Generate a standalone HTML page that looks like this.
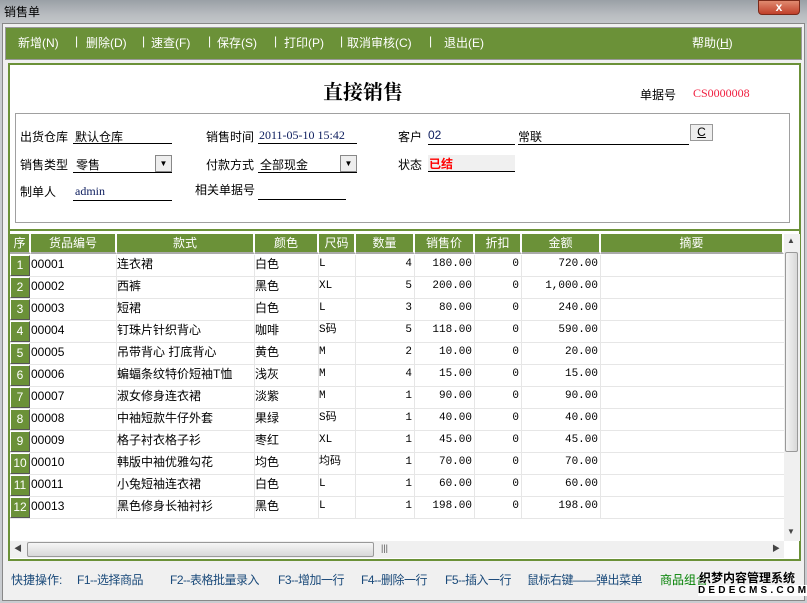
<!DOCTYPE html>
<html><head><meta charset="utf-8"><style>
*{margin:0;padding:0;box-sizing:border-box}
body{width:807px;height:603px;position:relative;overflow:hidden;background:#c9ccd0;font-family:"Liberation Sans","Noto Sans CJK SC",sans-serif;font-size:12px;color:#000}
.a{position:absolute;white-space:nowrap}
.tb{color:#fff;font-size:12px;top:34px}
.ul{position:absolute;border-bottom:1px solid #000;height:1px}
.mono{font-family:"Liberation Mono","Noto Sans CJK SC",monospace;font-size:11px}
.hc{position:absolute;top:234px;height:20px;background:#6b9138;color:#fff;text-align:center;line-height:19px;font-size:12px;border-right:2px solid #fff;border-bottom:2px solid #aaa}
.row{position:absolute;left:10px;width:774px;height:22px;border-bottom:1px solid #e6e6e6}
.c{position:absolute;top:0;height:21px;line-height:19px;border-right:1px solid #e6e6e6;overflow:hidden}
.r{text-align:right;padding-right:2px}
.sq{background:#6b9138;color:#fff;text-align:center;width:20px;left:0;border:1px solid #fff;border-right-color:#555;border-bottom-color:#555}
.st{position:absolute;top:571px;color:#1a4a7a;white-space:nowrap}
</style></head><body>
<div class="a" style="left:0;top:0;width:807px;height:24px;background:linear-gradient(#9aa0a6,#b8bcc0 60%,#c4c7ca)"></div>
<div class="a" style="left:4px;top:3px;font-size:12px;color:#000">销售单</div>
<div class="a" style="left:758px;top:0;width:42px;height:15px;background:linear-gradient(#e08a70,#c0402a);border:1px solid #7a2a1a;border-radius:0 0 4px 4px;color:#fff;text-align:center;font-size:12px;line-height:13px;font-weight:bold">x</div>
<div class="a" style="left:2px;top:23px;width:803px;height:578px;background:#f0f0f0;border:1px solid #888"></div>
<div class="a" style="left:5px;top:27px;width:797px;height:33px;background:#6b9138;border:1px solid #999"></div>
<div class="a tb" style="left:18px">新增(N)</div>
<div class="a tb" style="left:75px">|</div>
<div class="a tb" style="left:86px">删除(D)</div>
<div class="a tb" style="left:142px">|</div>
<div class="a tb" style="left:151px">速查(F)</div>
<div class="a tb" style="left:208px">|</div>
<div class="a tb" style="left:217px">保存(S)</div>
<div class="a tb" style="left:274px">|</div>
<div class="a tb" style="left:284px">打印(P)</div>
<div class="a tb" style="left:340px">|</div>
<div class="a tb" style="left:347px">取消审核(C)</div>
<div class="a tb" style="left:429px">|</div>
<div class="a tb" style="left:444px">退出(E)</div>
<div class="a tb" style="left:692px">帮助(<u>H</u>)</div>
<div class="a" style="left:8px;top:63px;width:793px;height:498px;border:2px solid #6b9138;background:#fff"></div>
<div class="a" style="left:323px;top:76px;font-size:20px;font-weight:bold;font-family:'Liberation Serif','Noto Serif CJK SC',serif">直接销售</div>
<div class="a" style="left:640px;top:86px">单据号</div>
<div class="a" style="left:693px;top:86px;color:#f02040;font-family:'Liberation Serif',serif">CS0000008</div>
<div class="a" style="left:15px;top:113px;width:775px;height:110px;border:1px solid #a0a0a0"></div>
<div class="a" style="left:20px;top:128px">出货仓库</div><div class="a" style="left:75px;top:128px">默认仓库</div><div class="ul" style="left:73px;top:143px;width:99px"></div>
<div class="a" style="left:206px;top:128px">销售时间</div><div class="a" style="left:259px;top:128px;font-family:'Liberation Serif',serif;color:#102060">2011-05-10 15:42</div><div class="ul" style="left:258px;top:143px;width:99px"></div>
<div class="a" style="left:398px;top:128px">客户</div><div class="a" style="left:428px;top:128px;color:#102060">02</div><div class="ul" style="left:428px;top:144px;width:87px"></div>
<div class="a" style="left:518px;top:128px">常联</div><div class="ul" style="left:518px;top:144px;width:171px"></div>
<div class="a" style="left:690px;top:124px;width:23px;height:17px;background:#eee;border:1px solid #999;text-align:center;line-height:14px;text-decoration:underline">C</div>
<div class="a" style="left:20px;top:156px">销售类型</div><div class="a" style="left:76px;top:156px">零售</div><div class="ul" style="left:73px;top:172px;width:99px"></div>
<div class="a" style="left:155px;top:155px;width:17px;height:17px;background:#eee;border:1px solid #888;font-size:8px;text-align:center;line-height:15px">▼</div>
<div class="a" style="left:206px;top:156px">付款方式</div><div class="a" style="left:260px;top:156px">全部现金</div><div class="ul" style="left:258px;top:172px;width:99px"></div>
<div class="a" style="left:340px;top:155px;width:17px;height:17px;background:#eee;border:1px solid #888;font-size:8px;text-align:center;line-height:15px">▼</div>
<div class="a" style="left:398px;top:156px">状态</div><div class="a" style="left:428px;top:155px;width:87px;height:17px;background:#f0f0f0;border-bottom:1px solid #000;color:#f00;font-weight:bold;padding-left:1px">已结</div>
<div class="a" style="left:20px;top:183px">制单人</div><div class="a" style="left:75px;top:184px;font-family:'Liberation Serif',serif;color:#102060">admin</div><div class="ul" style="left:73px;top:200px;width:99px"></div>
<div class="a" style="left:195px;top:181px">相关单据号</div><div class="ul" style="left:258px;top:199px;width:88px"></div>
<div class="a" style="left:8px;top:229px;width:793px;height:2px;background:#6b9138"></div>
<div class="hc" style="left:10px;width:21px">序</div>
<div class="hc" style="left:31px;width:86px">货品编号</div>
<div class="hc" style="left:117px;width:138px">款式</div>
<div class="hc" style="left:255px;width:64px">颜色</div>
<div class="hc" style="left:319px;width:37px">尺码</div>
<div class="hc" style="left:356px;width:59px">数量</div>
<div class="hc" style="left:415px;width:60px">销售价</div>
<div class="hc" style="left:475px;width:47px">折扣</div>
<div class="hc" style="left:522px;width:79px">金额</div>
<div class="hc" style="left:601px;width:183px">摘要</div>
<div class="a" style="left:784px;top:234px;width:16px;height:307px;background:#f0f0f0"></div>
<div class="a" style="left:785px;top:252px;width:13px;height:200px;background:linear-gradient(90deg,#f4f4f4,#d8d8d8);border:1px solid #999;border-radius:2px"></div>
<div class="a" style="left:787px;top:236px;font-size:8px;color:#444">▲</div>
<div class="a" style="left:787px;top:527px;font-size:8px;color:#444">▼</div>
<div class="a" style="left:10px;top:541px;width:774px;height:17px;background:#f0f0f0"></div>
<div class="a" style="left:27px;top:542px;width:347px;height:15px;background:linear-gradient(#f6f6f6,#d8d8d8);border:1px solid #999;border-radius:2px"></div>
<div class="a" style="left:14px;top:543px;font-size:8px;color:#444">◀</div>
<div class="a" style="left:772px;top:543px;font-size:8px;color:#444">▶</div>
<div class="a" style="left:381px;top:543px;font-size:9px;color:#555">|||</div>
<div id="rows"></div>
<script>
var d=[["00001","连衣裙","白色","L",4,"180.00","720.00"],["00002","西裤","黑色","XL",5,"200.00","1,000.00"],["00003","短裙","白色","L",3,"80.00","240.00"],["00004","钉珠片针织背心","咖啡","S码",5,"118.00","590.00"],["00005","吊带背心 打底背心","黄色","M",2,"10.00","20.00"],["00006","蝙蝠条纹特价短袖T恤","浅灰","M",4,"15.00","15.00"],["00007","淑女修身连衣裙","淡紫","M",1,"90.00","90.00"],["00008","中袖短款牛仔外套","果绿","S码",1,"40.00","40.00"],["00009","格子衬衣格子衫","枣红","XL",1,"45.00","45.00"],["00010","韩版中袖优雅勾花","均色","均码",1,"70.00","70.00"],["00011","小兔短袖连衣裙","白色","L",1,"60.00","60.00"],["00013","黑色修身长袖衬衫","黑色","L",1,"198.00","198.00"]];
var h="";d.forEach(function(r,i){var t=255+i*22;h+='<div class="row" style="top:'+t+'px">'+
'<div class="c sq">'+(i+1)+'</div>'+
'<div class="c" style="left:21px;width:86px">'+r[0]+'</div>'+
'<div class="c" style="left:107px;width:138px">'+r[1]+'</div>'+
'<div class="c" style="left:245px;width:64px">'+r[2]+'</div>'+
'<div class="c mono" style="left:309px;width:37px">'+r[3]+'</div>'+
'<div class="c r mono" style="left:346px;width:59px">'+r[4]+'</div>'+
'<div class="c r mono" style="left:405px;width:60px">'+r[5]+'</div>'+
'<div class="c r mono" style="left:465px;width:47px">0</div>'+
'<div class="c r mono" style="left:512px;width:79px">'+r[6]+'</div></div>';});
document.getElementById("rows").innerHTML=h;
</script>
<div class="st" style="left:11px">快捷操作:</div>
<div class="st" style="left:77px;letter-spacing:-0.5px">F1--选择商品</div>
<div class="st" style="left:170px;letter-spacing:-0.5px">F2--表格批量录入</div>
<div class="st" style="left:278px;letter-spacing:-0.5px">F3--增加一行</div>
<div class="st" style="left:361px;letter-spacing:-0.5px">F4--删除一行</div>
<div class="st" style="left:445px;letter-spacing:-0.5px">F5--插入一行</div>
<div class="st" style="left:527px;letter-spacing:-0.5px">鼠标右键——弹出菜单</div>
<div class="st" style="left:660px;color:#008000">商品组合</div>
<div class="a" style="left:699px;top:569px;font-weight:bold;font-size:12px;color:#000;text-shadow:0 0 2px #fff,0 0 2px #fff">织梦内容管理系统</div>
<div class="a" style="left:698px;top:585px;font-weight:bold;font-size:10px;letter-spacing:3.2px;color:#000;background:#fff">DEDECMS.COM</div>
</body></html>
